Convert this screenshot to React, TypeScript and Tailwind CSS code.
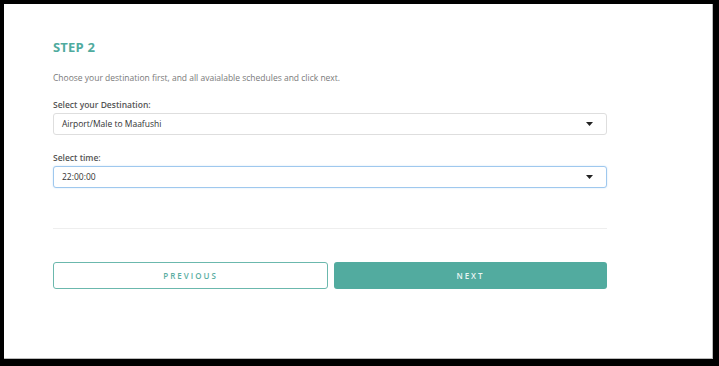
import React from 'react';

const Caret = () => (
  <svg width="7" height="4" viewBox="0 0 7 4" className="shrink-0">
    <path d="M0 0 L7 0 L3.5 4 Z" fill="#222" />
  </svg>
);

const SelectBox = ({ value, focused }: { value: string; focused?: boolean }) => (
  <div
    className={`flex items-center justify-between h-[22px] pl-[8px] pr-[13px] rounded-[3px] bg-white border ${
      focused ? 'border-[#9fc8ee] shadow-[0_0_2px_#cfe3f7]' : 'border-[#dedede]'
    }`}
  >
    <span className="text-[8.5px] text-[#333]">{value}</span>
    <Caret />
  </div>
);

const App = () => {
  return (
    <div
      className="w-[719px] h-[366px] bg-black pt-[4px] pl-[4px] pr-[6px] pb-[7px]"
      style={{ fontFamily: '"Open Sans", sans-serif' }}
    >
      <div className="w-full h-full bg-white border-r border-b border-[#bbb] pl-[49px]">
        <div className="w-[554px]">
          <h2 className="pt-[34px] text-[13px] font-bold text-[#4fab9e] leading-[18px] tracking-[0.2px]">
            STEP 2
          </h2>
          <p className="mt-[16px] text-[8.5px] text-[#7a7a7a] leading-[12px]">
            Choose your destination first, and all avaialable schedules and click next.
          </p>

          <label className="block mt-[15px] text-[8.5px] text-[#555] font-semibold leading-[12px] mb-[2px]">
            Select your Destination:
          </label>
          <SelectBox value="Airport/Male to Maafushi" />

          <label className="block mt-[17px] text-[8.5px] text-[#555] font-semibold leading-[12px] mb-[2px]">
            Select time:
          </label>
          <SelectBox value="22:00:00" focused />

          <div className="mt-[40px] border-t border-[#eeeeee]" />

          <div className="mt-[33px] flex gap-[6px]">
            <button className="flex-1 h-[27px] rounded-[3px] border-[1.5px] border-[#6bb8ad] bg-white text-[8px] font-semibold tracking-[2px] text-[#5aaea2]">
              PREVIOUS
            </button>
            <button className="flex-1 h-[27px] rounded-[3px] bg-[#52ab9f] text-[8px] font-semibold tracking-[2px] text-[#eaf5f3]">
              NEXT
            </button>
          </div>
        </div>
      </div>
    </div>
  );
};

export default App;
